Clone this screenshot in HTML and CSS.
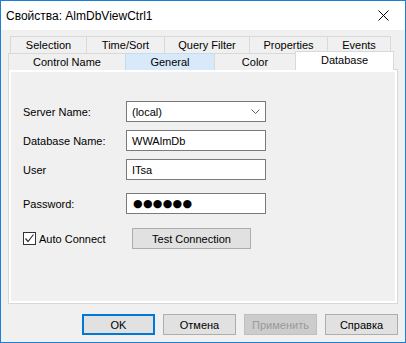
FILE: index.html
```html
<!DOCTYPE html>
<html lang="ru">
<head>
    <meta charset="UTF-8">
    <title>Свойства: AlmDbViewCtrl1</title>
    <link rel="stylesheet" href="styles.css">
</head>
<body>
    <div class="window">
        <div class="titlebar">
            <span class="title">Свойства: AlmDbViewCtrl1</span>
            <svg class="close" width="11" height="11" viewBox="0 0 11 11">
                <path d="M0.5 0.5 L10.5 10.5 M10.5 0.5 L0.5 10.5" stroke="#000" stroke-width="1" fill="none"/>
            </svg>
        </div>

        <div class="content">
            <!-- вкладки, задний ряд -->
            <div class="tabs tabs-back">
                <div class="tab" style="width: 77px">Selection</div>
                <div class="tab" style="width: 79px">Time/Sort</div>
                <div class="tab" style="width: 86px">Query Filter</div>
                <div class="tab" style="width: 79px">Properties</div>
                <div class="tab" style="width: 64px">Events</div>
            </div>
            <!-- вкладки, передний ряд -->
            <div class="tabs tabs-front">
                <div class="tab" style="width: 118px">Control Name</div>
                <div class="tab tab-hover" style="width: 90px">General</div>
                <div class="tab" style="width: 82px">Color</div>
                <div class="tab tab-active" style="width: 99px">Database</div>
            </div>

            <div class="panel">
                <div class="page">
                    <div class="row">
                        <label>Server Name:</label>
                        <div class="field combo">
                            <span>(local)</span>
                            <svg width="9" height="5" viewBox="0 0 9 5">
                                <path d="M0.5 0.5 L4.5 4.5 L8.5 0.5" stroke="#606060" stroke-width="1" fill="none"/>
                            </svg>
                        </div>
                    </div>
                    <div class="row">
                        <label>Database Name:</label>
                        <div class="field">WWAlmDb</div>
                    </div>
                    <div class="row">
                        <label>User</label>
                        <div class="field">ITsa</div>
                    </div>
                    <div class="row row-gap">
                        <label>Password:</label>
                        <div class="field password">●●●●●●</div>
                    </div>
                    <div class="row row-check">
                        <div class="check">
                            <span class="box">
                                <svg width="11" height="11" viewBox="0 0 11 11">
                                    <path d="M1.5 5.5 L4 8.5 L9.5 1.5" stroke="#333" stroke-width="1.2" fill="none"/>
                                </svg>
                            </span>
                            <span>Auto Connect</span>
                        </div>
                        <button class="btn btn-test">Test Connection</button>
                    </div>
                </div>
            </div>

            <div class="footer">
                <button class="btn btn-default">OK</button>
                <button class="btn">Отмена</button>
                <button class="btn" disabled>Применить</button>
                <button class="btn">Справка</button>
            </div>
        </div>
    </div>
</body>
</html>
```

FILE: styles.css
```css
body { margin: 0; font-family: "Liberation Sans", Arial, sans-serif; font-size: 11px; color: #000; }
.window { width: 406px; height: 343px; box-sizing: border-box; border: 1px solid #1a7fd5; background: #f0f0f0; }
.titlebar { height: 29px; background: #fff; display: flex; align-items: center; justify-content: space-between; padding: 0 16px 0 5px; }
.title { font-size: 12px; }
.content { padding: 6px 7px 0 7px; }

.tabs { display: flex; }
.tab { box-sizing: border-box; height: 17px; border: 1px solid #d9d9d9; border-bottom: none; margin-right: -1px; background: #f0f0f0; display: flex; align-items: center; justify-content: center; }
.tabs-back { margin-left: 2px; }
.tabs-back .tab:last-child { margin-right: 0; }
.tabs-front { margin-bottom: -1px; align-items: flex-end; }
.tabs-front .tab { height: 17px; }
.tab-hover { background: #d8eaf9; border-color: #c5dcf0; }
.tab-active { background: #fff; height: 19px !important; margin-top: -2px; margin-right: 0; position: relative; padding-bottom: 2px; }

.panel { border: 1px solid #d9d9d9; background: #fff; padding: 2px; height: 235px; box-sizing: border-box; }
.page { background: #f0f0f0; height: 100%; padding: 29px 0 0 12px; box-sizing: border-box; }

.row { display: flex; align-items: center; height: 21px; margin-bottom: 8px; }
.row-gap { margin-top: 13px; }
.row-check { margin-top: 14px; }
label { width: 103px; }
.field { box-sizing: border-box; width: 140px; height: 21px; border: 1px solid #7a7a7a; background: #fff; padding: 0 5px; display: flex; align-items: center; }
.combo { justify-content: space-between; padding-right: 5px; }
.password { font-family: "DejaVu Sans", sans-serif; font-size: 11px; letter-spacing: 0.3px; padding-left: 6px; }

.check { width: 109px; display: flex; align-items: center; }
.box { box-sizing: border-box; width: 13px; height: 13px; border: 1px solid #333; background: #fff; margin-right: 3px; display: flex; }

.btn { box-sizing: border-box; height: 21px; width: 73px; border: 1px solid #adadad; background: #e1e1e1; font-family: inherit; font-size: 11px; color: #000; padding: 0; }
.btn-test { width: 119px; }
.btn-default { border: 2px solid #0078d7; }
.btn[disabled] { color: #9a9a9a; background: #cccccc; border-color: #bfbfbf; }

.footer { display: flex; justify-content: flex-end; gap: 8px; margin-top: 10px; }
```
